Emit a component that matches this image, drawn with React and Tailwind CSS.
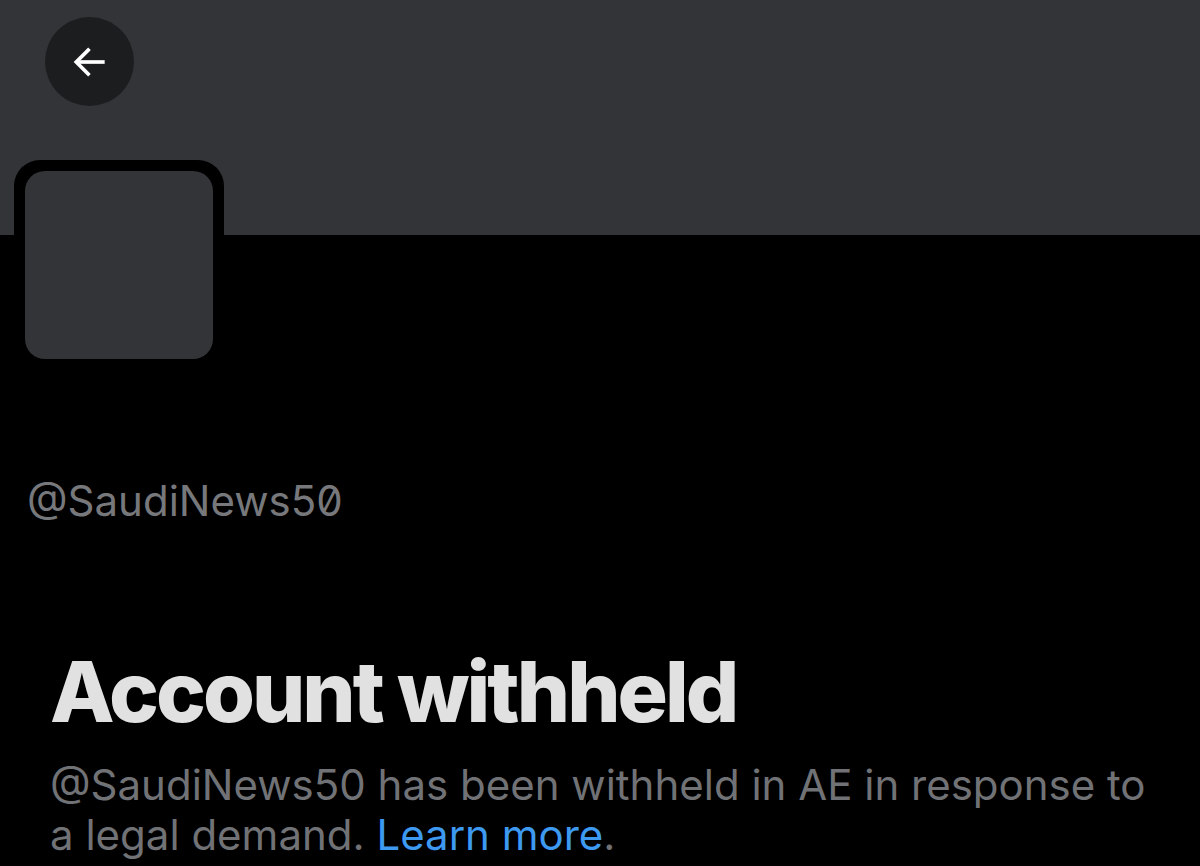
export default function App() {
  return (
    <div className="w-[1200px] h-[866px] bg-black overflow-hidden font-['Inter',sans-serif]">
      <div className="relative h-[235px] bg-[#333438]">
        <button className="absolute left-[45px] top-[17px] w-[89px] h-[89px] rounded-full bg-[#1c1d1f] flex items-center justify-center">
          <svg width="44" height="44" viewBox="0 0 24 24" fill="none" stroke="white" strokeWidth="2" strokeLinecap="square">
            <path d="M19 12H5.5" />
            <path d="M11 5.5L4.5 12L11 18.5" />
          </svg>
        </button>
      </div>
      <div className="relative z-10 px-[14px] -mt-[75px]">
        <div className="w-[210px] h-[210px] bg-black rounded-[26px] p-[11px]">
          <div className="w-full h-full bg-[#333438] rounded-[20px]" />
        </div>
      </div>
      <div className="pl-[27px] mt-[106px] text-[42px] leading-[50px] text-[#77787c] [font-feature-settings:'zero']">
        @SaudiNews50
      </div>
      <div className="pl-[50px] mt-[124px]">
        <h1 className="text-[84px] leading-[84px] font-extrabold text-[#e1e1e1] tracking-[-3px]">
          Account withheld
        </h1>
        <p className="mt-[26px] text-[42px] leading-[50px] text-[#707276] w-[1110px]">
          @SaudiNews50 has been withheld in AE in response to a legal demand.{" "}
          <span className="text-[#3d9af0]">Learn more</span>.
        </p>
      </div>
    </div>
  );
}
